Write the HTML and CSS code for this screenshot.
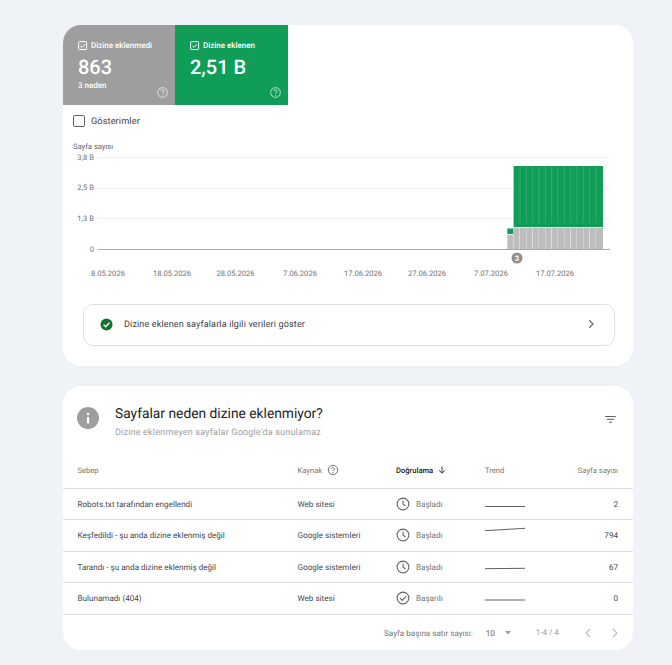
FILE: index.html
```html
<!DOCTYPE html>
<html lang="tr">
<head>
<meta charset="utf-8">
<title>Sayfa dizine ekleme</title>
<link rel="stylesheet" href="styles.css">
</head>
<body>
<main class="page">
  <section class="card chart-card">
    <div class="tiles">
      <div class="tile tile-grey">
        <div class="tile-label"><svg class="tile-check" viewBox="0 0 10 10"><rect x="0.6" y="0.6" width="8" height="8" rx="0.8" fill="none" stroke="#fff" stroke-width="1"/><path d="M2.4 4.8l1.6 1.6 3-3.2" fill="none" stroke="#fff" stroke-width="1"/></svg>Dizine eklenmedi</div>
        <div class="tile-value">863</div>
        <div class="tile-sub">3 neden</div>
        <svg class="tile-help" viewBox="0 0 12 12"><circle cx="6" cy="6" r="4.5" fill="none" stroke="currentColor" stroke-width="1"/><path d="M4.6 4.9a1.4 1.4 0 1 1 2.2 1.1c-.5.4-.8.6-.8 1.2" fill="none" stroke="currentColor" stroke-width="1"/><circle cx="6" cy="8.6" r=".6" fill="currentColor"/></svg>
      </div>
      <div class="tile tile-green">
        <div class="tile-label"><svg class="tile-check" viewBox="0 0 10 10"><rect x="0.6" y="0.6" width="8" height="8" rx="0.8" fill="none" stroke="#fff" stroke-width="1"/><path d="M2.4 4.8l1.6 1.6 3-3.2" fill="none" stroke="#fff" stroke-width="1"/></svg>Dizine eklenen</div>
        <div class="tile-value">2,51 B</div>
        <svg class="tile-help" viewBox="0 0 12 12"><circle cx="6" cy="6" r="4.5" fill="none" stroke="currentColor" stroke-width="1"/><path d="M4.6 4.9a1.4 1.4 0 1 1 2.2 1.1c-.5.4-.8.6-.8 1.2" fill="none" stroke="currentColor" stroke-width="1"/><circle cx="6" cy="8.6" r=".6" fill="currentColor"/></svg>
      </div>
    </div>
    <label class="impressions"><span class="box"></span>Gösterimler</label>
    <svg class="chart" width="570" height="150" viewBox="63 140 570 150">
      <text class="axis-title" x="73" y="149">Sayfa sayısı</text>
      <g class="grid">
        <line x1="98" x2="610" y1="157.5" y2="157.5"/>
        <line x1="98" x2="610" y1="188.5" y2="188.5"/>
        <line x1="98" x2="610" y1="218.5" y2="218.5"/>
      </g>
      <line class="baseline" x1="98" x2="610" y1="249.5" y2="249.5"/>
      <g class="y-labels">
        <text x="94" y="160">3,8 B</text>
        <text x="94" y="190">2,5 B</text>
        <text x="94" y="221">1,3 B</text>
        <text x="94" y="252">0</text>
      </g>
      <g class="bars-grey">
        <rect x="507.3" y="234.7" width="6" height="14.3"/>
        <rect x="513.6" y="227.7" width="6" height="21.3"/>
        <rect x="520" y="227.7" width="6" height="21.3"/>
        <rect x="526.3" y="227.7" width="6" height="21.3"/>
        <rect x="532.7" y="227.7" width="6" height="21.3"/>
        <rect x="539" y="227.7" width="6" height="21.3"/>
        <rect x="545.3" y="227.7" width="6" height="21.3"/>
        <rect x="551.7" y="227.7" width="6" height="21.3"/>
        <rect x="558" y="227.7" width="6" height="21.3"/>
        <rect x="564.3" y="227.7" width="6" height="21.3"/>
        <rect x="570.7" y="227.7" width="6" height="21.3"/>
        <rect x="577" y="227.7" width="6" height="21.3"/>
        <rect x="583.3" y="227.7" width="6" height="21.3"/>
        <rect x="589.7" y="227.7" width="6" height="21.3"/>
        <rect x="596" y="227.7" width="7" height="21.3"/>
      </g>
      <g class="bars-green">
        <rect x="507.3" y="228.5" width="6" height="5.5"/>
        <rect x="513.6" y="166" width="89.4" height="61"/>
      </g>
      <g class="bars-seams">
        <line x1="520" x2="520" y1="166" y2="223"/>
        <line x1="526.3" x2="526.3" y1="166" y2="223"/>
        <line x1="532.7" x2="532.7" y1="166" y2="223"/>
        <line x1="539" x2="539" y1="166" y2="223"/>
        <line x1="545.3" x2="545.3" y1="166" y2="223"/>
        <line x1="551.7" x2="551.7" y1="166" y2="223"/>
        <line x1="558" x2="558" y1="166" y2="223"/>
        <line x1="564.3" x2="564.3" y1="166" y2="223"/>
        <line x1="570.7" x2="570.7" y1="166" y2="223"/>
        <line x1="577" x2="577" y1="166" y2="223"/>
        <line x1="583.3" x2="583.3" y1="166" y2="223"/>
        <line x1="589.7" x2="589.7" y1="166" y2="223"/>
        <line x1="596" x2="596" y1="166" y2="223"/>
      </g>
      <circle class="marker" cx="517" cy="258" r="5.5"/>
      <text class="marker-text" x="517" y="260.6">3</text>
      <g class="x-labels">
        <text x="108" y="276">8.05.2026</text>
        <text x="172" y="276">18.05.2026</text>
        <text x="235.5" y="276">28.05.2026</text>
        <text x="300" y="276">7.06.2026</text>
        <text x="363" y="276">17.06.2026</text>
        <text x="427" y="276">27.06.2026</text>
        <text x="491" y="276">7.07.2026</text>
        <text x="555" y="276">17.07.2026</text>
      </g>
    </svg>
    <div class="cta">
      <svg class="cta-check" viewBox="0 0 14 14"><circle cx="7" cy="7" r="6.5" fill="#137333"/><path d="M3.9 7.2l2.2 2.2 4-4.2" fill="none" stroke="#fff" stroke-width="1.5"/></svg>
      <span class="cta-text">Dizine eklenen sayfalarla ilgili verileri göster</span>
      <svg class="cta-arrow" viewBox="0 0 10 10"><path d="M3.2 1.2L7 5 3.2 8.8" fill="none" stroke="#5f6368" stroke-width="1.2"/></svg>
    </div>
  </section>

  <section class="card table-card">
    <header class="table-head">
      <svg class="info" viewBox="0 0 22 22"><circle cx="11" cy="11" r="11" fill="#9e9e9e"/><rect x="10" y="10" width="2.2" height="6.5" fill="#fff"/><rect x="10" y="6" width="2.2" height="2.2" fill="#fff"/></svg>
      <div class="head-text">
        <h2>Sayfalar neden dizine eklenmiyor?</h2>
        <p>Dizine eklenmeyen sayfalar Google'da sunulamaz</p>
      </div>
      <svg class="filter" viewBox="0 0 12 8"><path d="M0 .5h12M2 3.8h8M4.4 7.1h3.2" fill="none" stroke="#3c4043" stroke-width="1"/></svg>
    </header>
    <div class="row row-header">
      <div class="c-reason">Sebep</div>
      <div class="c-source">Kaynak<svg class="help-small" viewBox="0 0 12 12"><circle cx="6" cy="6" r="4.7" fill="none" stroke="currentColor" stroke-width=".9"/><path d="M4.6 4.9a1.4 1.4 0 1 1 2.2 1.1c-.5.4-.8.6-.8 1.2" fill="none" stroke="currentColor" stroke-width=".9"/><circle cx="6" cy="8.6" r=".55" fill="currentColor"/></svg></div>
      <div class="c-valid sorted">Doğrulama<svg class="sort" viewBox="0 0 8 8"><path d="M4 .5v6.5M1 4.2L4 7.2l3-3" fill="none" stroke="#202124" stroke-width=".9"/></svg></div>
      <div class="c-trend">Trend</div>
      <div class="c-count">Sayfa sayısı</div>
    </div>
    <div class="row">
      <div class="c-reason">Robots.txt tarafından engellendi</div>
      <div class="c-source">Web sitesi</div>
      <div class="c-valid"><svg class="state" viewBox="0 0 14 14"><circle cx="7" cy="7" r="5.9" fill="none" stroke="#5f6368" stroke-width="1.1"/><path d="M7 3.4V7l2.6 2.2" fill="none" stroke="#5f6368" stroke-width="1.1"/></svg><span>Başladı</span></div>
      <div class="c-trend"><svg class="spark" viewBox="0 0 40 16"><path d="M0 10.5h40" fill="none" stroke="#616161" stroke-width="1"/></svg></div>
      <div class="c-count">2</div>
    </div>
    <div class="row">
      <div class="c-reason">Keşfedildi - şu anda dizine eklenmiş değil</div>
      <div class="c-source">Google sistemleri</div>
      <div class="c-valid"><svg class="state" viewBox="0 0 14 14"><circle cx="7" cy="7" r="5.9" fill="none" stroke="#5f6368" stroke-width="1.1"/><path d="M7 3.4V7l2.6 2.2" fill="none" stroke="#5f6368" stroke-width="1.1"/></svg><span>Başladı</span></div>
      <div class="c-trend"><svg class="spark" viewBox="0 0 40 16"><path d="M0 3.7L40 1.3" fill="none" stroke="#616161" stroke-width="1"/></svg></div>
      <div class="c-count">794</div>
    </div>
    <div class="row">
      <div class="c-reason">Tarandı - şu anda dizine eklenmiş değil</div>
      <div class="c-source">Google sistemleri</div>
      <div class="c-valid"><svg class="state" viewBox="0 0 14 14"><circle cx="7" cy="7" r="5.9" fill="none" stroke="#5f6368" stroke-width="1.1"/><path d="M7 3.4V7l2.6 2.2" fill="none" stroke="#5f6368" stroke-width="1.1"/></svg><span>Başladı</span></div>
      <div class="c-trend"><svg class="spark" viewBox="0 0 40 16"><path d="M0 9.7L40 9.3" fill="none" stroke="#616161" stroke-width="1"/></svg></div>
      <div class="c-count">67</div>
    </div>
    <div class="row">
      <div class="c-reason">Bulunamadı (404)</div>
      <div class="c-source">Web sitesi</div>
      <div class="c-valid"><svg class="state" viewBox="0 0 14 14"><circle cx="7" cy="7" r="5.9" fill="none" stroke="#5f6368" stroke-width="1.1"/><path d="M4 7.2l2.2 2.2 4-4.2" fill="none" stroke="#5f6368" stroke-width="1.1"/></svg><span>Başarılı</span></div>
      <div class="c-trend"><svg class="spark" viewBox="0 0 40 16"><path d="M0 10h40" fill="none" stroke="#616161" stroke-width="1"/></svg></div>
      <div class="c-count">0</div>
    </div>
    <footer class="pager">
      <span class="pager-label">Sayfa başına satır sayısı:</span>
      <span class="pager-size">10</span>
      <svg class="pager-caret" viewBox="0 0 8 4"><path d="M1 0h6L4 3.4z" fill="#9e9e9e"/></svg>
      <span class="pager-range">1-4 / 4</span>
      <svg class="pager-arrow" viewBox="0 0 8 10"><path d="M6 1L2 5l4 4" fill="none" stroke="#bdbdbd" stroke-width="1.1"/></svg>
      <svg class="pager-arrow next" viewBox="0 0 8 10"><path d="M2 1l4 4-4 4" fill="none" stroke="#bdbdbd" stroke-width="1.1"/></svg>
    </footer>
  </section>
</main>
</body>
</html>
```
FILE: styles.css
```css
* { box-sizing: border-box; }
html, body { margin: 0; padding: 0; height: 100%; overflow: hidden; }
body {
  background: #eff3f8;
  font-family: Roboto, "Liberation Sans", sans-serif;
  color: #3c4043;
  text-rendering: geometricPrecision;
}
.page {
  width: 570px;
  margin-left: 63px;
  padding-top: 25px;
  display: flex;
  flex-direction: column;
  gap: 20px;
}
.card { background: #fff; border-radius: 18px; overflow: hidden; }
.chart-card { height: 341px; }
.table-card { height: 264px; }

.tiles { display: flex; height: 80px; }
.tile { position: relative; height: 80px; color: #fff; padding: 16px 0 0 15px; }
.tile-grey { width: 112px; background: #9e9e9e; }
.tile-green { width: 113px; background: #0f9d58; }
.tile-label { display: flex; align-items: center; gap: 3px; font-size: 8px; font-weight: 500; line-height: 10px; white-space: nowrap; }
.tile-check { width: 10px; height: 10px; flex: none; }
.tile-value { font-size: 20px; font-weight: 500; line-height: 24px; margin-top: 4px; }
.tile-sub { font-size: 8px; font-weight: 500; line-height: 10px; margin-top: 2px; }
.tile-help { position: absolute; right: 6.5px; bottom: 6px; width: 13px; height: 13px; color: rgba(255,255,255,.55); }

.impressions { display: flex; align-items: center; gap: 6px; height: 14px; margin: 9px 0 0 10px; font-size: 9.2px; letter-spacing: .1px; color: #3c4043; }
.box { width: 12px; height: 12px; border: 1px solid #5f6368; border-radius: 2px; }

.chart { display: block; margin-top: 12px; }
.chart text { font-family: Roboto, "Liberation Sans", sans-serif; }
.axis-title { font-size: 7.6px; fill: #5f6368; }
.grid line { stroke: #f0f0f0; stroke-width: 1; }
.baseline { stroke: #aaa; stroke-width: 1; }
.y-labels text { font-size: 7.6px; fill: #757575; text-anchor: end; }
.x-labels text { font-size: 7.6px; fill: #757575; text-anchor: middle; }
.bars-grey rect { fill: #bdbdbd; }
.bars-green rect { fill: #0f9d58; }
.bars-seams line { stroke: #3fae78; stroke-width: .8; }
.marker { fill: #8f8f8f; }
.marker-text { font-size: 7.5px; font-weight: 700; fill: #fff; text-anchor: middle; }

.cta {
  display: flex;
  align-items: center;
  width: 532px;
  height: 42px;
  margin: 14px 0 0 20px;
  padding: 0 18px 0 15.5px;
  border: 1px solid #dfe1e5;
  border-radius: 10px;
}
.cta-check { width: 13px; height: 13px; flex: none; margin-top: -1px; }
.cta-text { margin-left: 11.5px; font-size: 9px; letter-spacing: .15px; color: #3c4043; flex: 1; margin-top: -1px; }
.cta-arrow { width: 10px; height: 10px; flex: none; margin-top: -2px; }

.table-head { display: flex; align-items: flex-start; height: 64px; padding: 21px 17px 0 14px; }
.info { width: 22px; height: 22px; flex: none; }
.head-text { flex: 1; margin-left: 16px; margin-top: -1px; }
.head-text h2 { margin: 0; font-family: Roboto, sans-serif; font-size: 13.8px; font-weight: 400; line-height: 16px; color: #202124; }
.head-text p { margin: 6px 0 0; font-size: 9px; letter-spacing: .2px; line-height: 11px; color: #9e9e9e; }
.filter { width: 11px; height: 7px; margin-top: 9px; flex: none; }

.row {
  display: grid;
  grid-template-columns: 220px 98.5px 89px 1fr 60px;
  align-items: center;
  height: 31.5px;
  padding: 0 15px 0 14.5px;
  border-bottom: 1px solid #e0e0e0;
  font-size: 8.1px;
  color: #45484b;
}
.row-header { height: 38.5px; padding-top: 3px; color: #757575; font-size: 7.6px; }
.c-source, .c-valid { display: flex; align-items: center; white-space: nowrap; }
.c-count { text-align: right; white-space: nowrap; }
.sorted { color: #202124; font-weight: 500; }
.help-small { width: 12px; height: 12px; margin-left: 5px; color: #5f6368; }
.sort { width: 8px; height: 8px; margin-left: 5px; }
.state { width: 14px; height: 14px; flex: none; }
.c-valid span { margin-left: 6px; color: #757575; }
.spark { display: block; width: 40px; height: 16px; }

.pager { display: flex; align-items: center; height: 36px; padding-left: 321px; font-size: 8.1px; color: #757575; white-space: nowrap; }
.pager-size { margin-left: 13px; color: #5f6368; }
.pager-caret { width: 8px; height: 4px; margin-left: 9px; }
.pager-range { margin-left: 24px; font-size: 8px; color: #9e9e9e; }
.pager-arrow { width: 8px; height: 10px; margin-left: 24.7px; }
.pager-arrow.next { margin-left: 19.3px; }
```
